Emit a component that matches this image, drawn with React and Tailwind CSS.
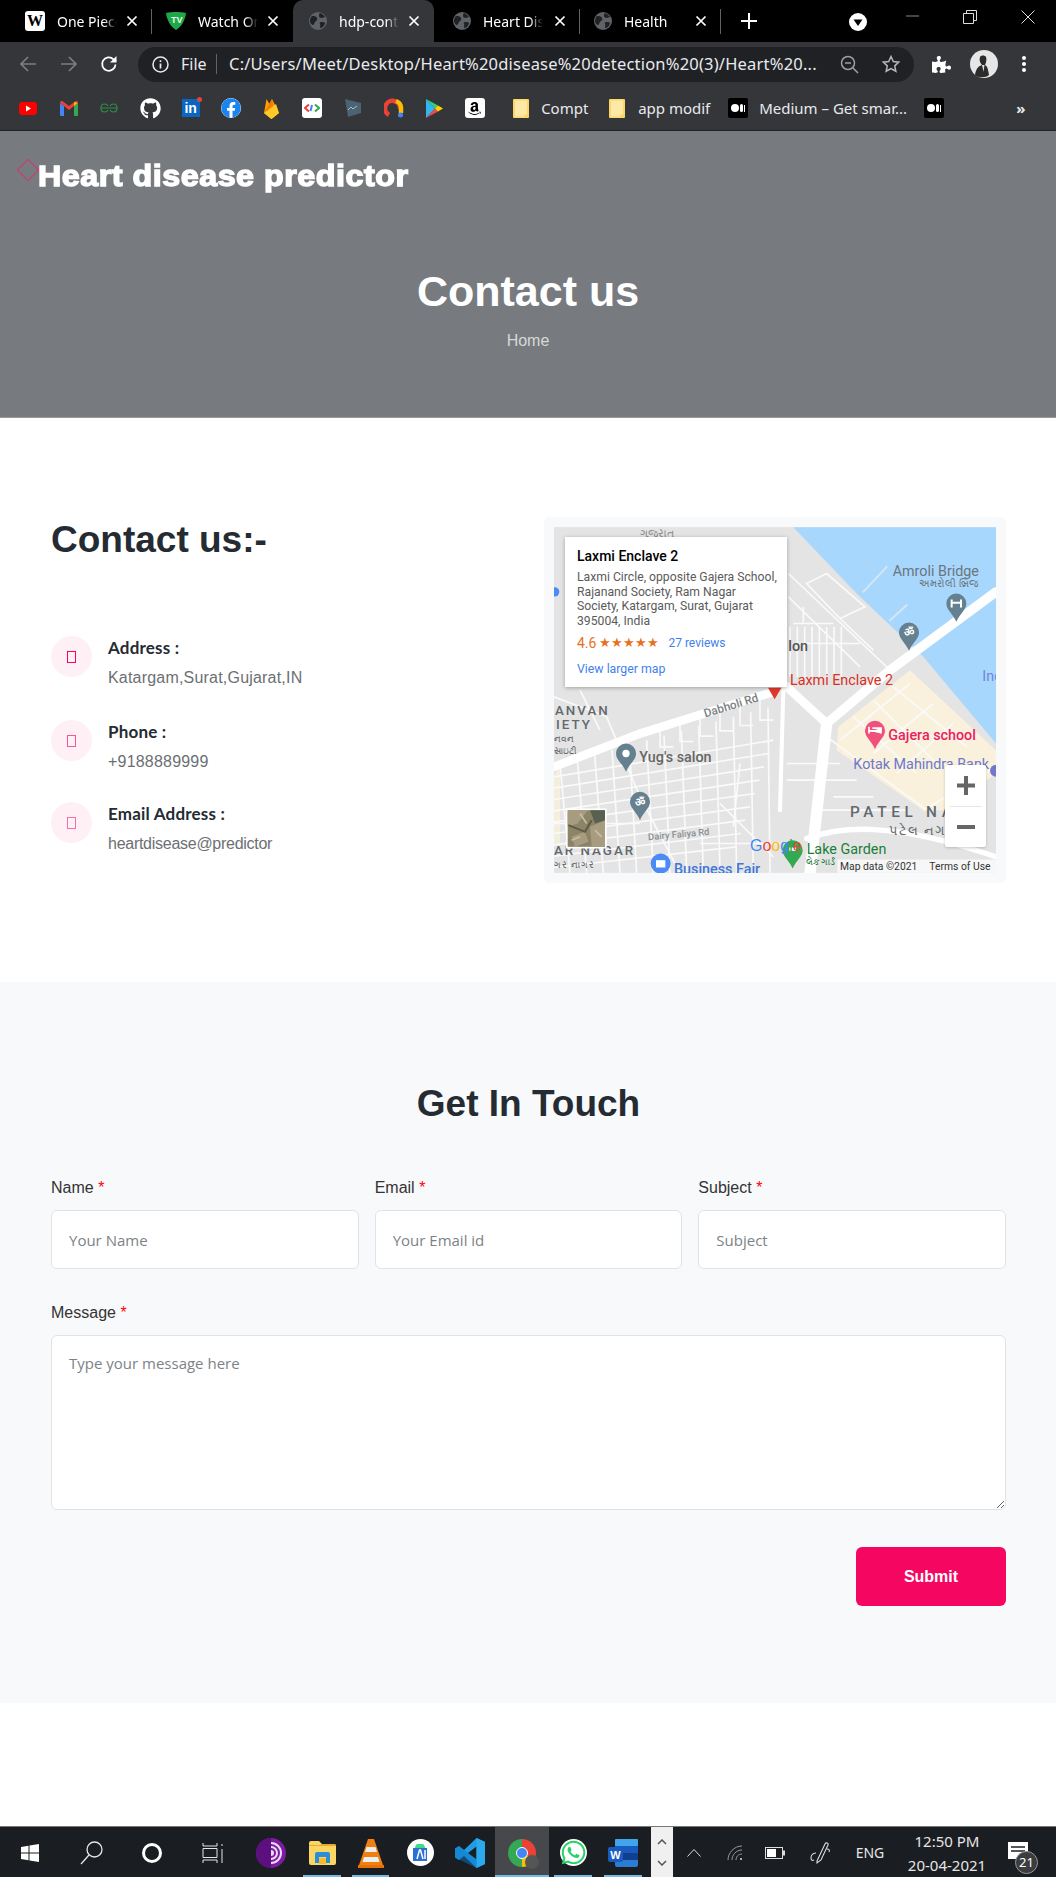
import React from "react";
import { FaGithub, FaFacebook, FaAmazon, FaWhatsapp, FaPuzzlePiece } from "react-icons/fa";

const X = ({ className = "" }) => (
  <svg width="12" height="12" viewBox="0 0 12 12" className={className}>
    <path d="M1.5 1.5l9 9M10.5 1.5l-9 9" stroke="#fff" strokeWidth="1.7" />
  </svg>
);

const Globe = () => (
  <svg width="18" height="18" viewBox="0 0 18 18" className="shrink-0">
    <circle cx="9" cy="9" r="9" fill="#5f6368" />
    <path d="M3 4c2 0 4 0 5 2s-1 3-2 4-1 3-2 3-3-2-3-4 1-4 2-5zM11 1c2 1 4 2 5 4l-3 1c-2 0-3-1-3-2s0-2 1-3zM12 10c2 0 4 0 4 1s-2 5-4 5 0-3-1-4 0-2 1-2z" fill="#202124" />
  </svg>
);

const WikiIcon = () => (
  <div className="w-[20px] h-[20px] rounded-[3px] bg-white shrink-0 flex items-center justify-center text-black font-bold text-[16px] leading-none" style={{ fontFamily: "'Liberation Serif', serif" }}>W</div>
);

const TvIcon = () => (
  <svg width="20" height="18" viewBox="0 0 20 18" className="shrink-0">
    <path d="M0 1c6-1.3 14-1.3 20 0-1 8-5 14-10 17C5 15 1 9 0 1z" fill="#1fa84a" />
    <text x="5" y="11" fontSize="9" fontWeight="700" fill="#e8ffe8" fontFamily="'Liberation Sans', sans-serif">TV</text>
  </svg>
);

function Tab({ icon, title, active, sep, className = "" }) {
  return (
    <div className={`w-[141px] h-[42px] shrink-0 flex items-center relative pr-[14px] ${active ? "bg-[#35363a] rounded-t-[10px] pl-[16px]" : "pl-[14px]"} ${className}`}>
      {icon}
      <div className="ml-[12px] w-[60px] overflow-hidden whitespace-nowrap text-[14px] text-white [mask-image:linear-gradient(90deg,#000_78%,transparent)]">{title}</div>
      <X className="ml-auto" />
      {sep && <div className="absolute right-0 top-[9px] w-px h-[25px] bg-[#5f6368]" />}
    </div>
  );
}

function TabBar() {
  return (
    <div className="h-[42px] bg-black flex pl-[11px]" style={{ fontFamily: "'Noto Sans', sans-serif" }}>
      <Tab icon={<WikiIcon />} title="One Piece" sep />
      <Tab icon={<TvIcon />} title="Watch One" />
      <Tab icon={<Globe />} title="hdp-contact" active />
      <Tab icon={<Globe />} title="Heart Disease" sep className="ml-[5px]" />
      <Tab icon={<Globe />} title="Health" sep />
      <svg width="16" height="16" viewBox="0 0 16 16" className="ml-[20px] mt-[13px]">
        <path d="M8 0v16M0 8h16" stroke="#fff" strokeWidth="2" />
      </svg>
      <svg width="18" height="18" viewBox="0 0 18 18" className="ml-[92px] mt-[13px]">
        <circle cx="9" cy="9" r="9" fill="#fff" />
        <path d="M4.5 6.5h9L9 13z" fill="#000" />
      </svg>
      <svg width="14" height="14" viewBox="0 0 14 14" className="ml-[39px] mt-[9px]">
        <path d="M0 7h13" stroke="#8a8a8a" />
      </svg>
      <svg width="14" height="14" viewBox="0 0 14 14" className="ml-[43px] mt-[10px]">
        <path d="M.5 3.5h10v10H.5zM3.5 3.5v-3h10v10h-3" fill="none" stroke="#ddd" />
      </svg>
      <svg width="14" height="14" viewBox="0 0 14 14" className="ml-[44px] mt-[10px]">
        <path d="M.5.5l13 13M13.5.5l-13 13" stroke="#ddd" />
      </svg>
    </div>
  );
}

function Toolbar() {
  return (
    <div className="h-[44px] bg-[#35363a] flex items-center" style={{ fontFamily: "'Noto Sans', sans-serif" }}>
      <svg width="18" height="18" viewBox="0 0 18 18" className="ml-[19px]">
        <path d="M17 9H2M9 2L2 9l7 7" fill="none" stroke="#7c7e82" strokeWidth="1.7" />
      </svg>
      <svg width="18" height="18" viewBox="0 0 18 18" className="ml-[23px]">
        <path d="M1 9h15M9 2l7 7-7 7" fill="none" stroke="#7c7e82" strokeWidth="1.7" />
      </svg>
      <svg width="18" height="18" viewBox="0 0 18 18" className="ml-[22px]">
        <path d="M15.5 9.5a6.7 6.7 0 1 1-2-5.2L16 6.5" fill="none" stroke="#fff" strokeWidth="1.8" />
        <path d="M16.5 1v6.5H10z" fill="#fff" />
      </svg>
      <div className="ml-[20px] w-[776px] h-[35px] rounded-full bg-[#202124] flex items-center pl-[14px] text-[#e8eaed]">
        <svg width="17" height="17" viewBox="0 0 17 17" className="shrink-0">
          <circle cx="8.5" cy="8.5" r="7.5" fill="none" stroke="#e8eaed" strokeWidth="1.5" />
          <path d="M8.5 7.5v5M8.5 4.2V6" stroke="#e8eaed" strokeWidth="1.7" />
        </svg>
        <span className="ml-[12px] w-[26px] text-[16px]">File</span>
        <div className="ml-[9px] w-px h-[20px] bg-[#5f6368]" />
        <span className="ml-[12px] w-[590px] shrink-0 whitespace-nowrap text-[16.5px] tracking-[0.2px]">C:/Users/Meet/Desktop/Heart%20disease%20detection%20(3)/Heart%20...</span>
        <svg width="19" height="19" viewBox="0 0 19 19" className="ml-[21px] shrink-0">
          <circle cx="8" cy="8" r="6.5" fill="none" stroke="#9aa0a6" strokeWidth="1.5" />
          <path d="M5 8h6M13 13l5 5" stroke="#9aa0a6" strokeWidth="1.5" />
        </svg>
        <svg width="20" height="20" viewBox="0 0 24 24" className="ml-[22px] shrink-0">
          <path d="M12 3l2.8 6 6.5.8-4.8 4.4 1.3 6.5-5.8-3.3-5.8 3.3 1.3-6.5-4.8-4.4 6.5-.8z" fill="none" stroke="#b4b7bb" strokeWidth="1.8" />
        </svg>
      </div>
      <FaPuzzlePiece className="ml-[18px] text-white text-[19px]" />
      <svg width="28" height="28" viewBox="0 0 28 28" className="ml-[19px]">
        <circle cx="14" cy="14" r="14" fill="#e6e6e6" />
        <path d="M5 25c1-7 4-9 7-10-2-2-3-5-2-8 1-2 5-2 6 0s0 6-1 8c2 1 3 3 4 10-3 3-11 3-14 0z" fill="#2b2b2b" />
        <path d="M12 15l1.500 7 1-7z" fill="#ddd" />
      </svg>
      <svg width="6" height="18" viewBox="0 0 6 18" className="ml-[23px]">
        <circle cx="3" cy="3" r="2" fill="#fff" />
        <circle cx="3" cy="9" r="2" fill="#fff" />
        <circle cx="3" cy="15" r="2" fill="#fff" />
      </svg>
    </div>
  );
}

const Folder = () => (
  <svg width="16" height="19" viewBox="0 0 16 19" className="block">
    <path d="M1 0h14a1 1 0 0 1 1 1v17a1 1 0 0 1-1 1H1a1 1 0 0 1-1-1V1a1 1 0 0 1 1-1z" fill="#fdd663" />
    <path d="M2 1.500h12v14h-2.500v2H2z" fill="#fee9a6" />
  </svg>
);

const Medium = () => (
  <div className="w-[20px] h-[20px] bg-black rounded-[2px] flex items-center justify-center gap-px shrink-0">
    <span className="w-[8px] h-[8px] rounded-full bg-white" />
    <span className="w-[3px] h-[8px] rounded-full bg-white" />
    <span className="w-[1px] h-[7px] bg-white" />
  </div>
);

const bookmarkIcons = [
  <svg width="18" height="13" viewBox="0 0 18 13"><rect width="18" height="13" rx="3" fill="#f00" /><path d="M7 3.500l5 3-5 3z" fill="#fff" /></svg>,
  <svg width="18" height="15" viewBox="0 0 18 15"><path d="M0 2l4 3v10H1a1 1 0 0 1-1-1z" fill="#4285f4" /><path d="M18 2l-4 3v10h3a1 1 0 0 0 1-1z" fill="#34a853" /><path d="M0 2c0-2 2-2.500 3-1.500L9 5l6-4.500c1-1 3-.5 3 1.500l-4 3-5 4-5-4z" fill="#ea4335" /><path d="M14 .9L18 2l-4 3z" fill="#fbbc04" /></svg>,
  <svg width="18" height="10" viewBox="0 0 18 10"><g fill="none" stroke="#2f8d46" strokeWidth="1.2"><path d="M9 5H1c0-2 1-4 3.500-4 2 0 3 1 3.500 2M9 5h8c0-2-1-4-3.500-4-2 0-3 1-3.500 2" /><path d="M1 5c0 2 1 4 3.500 4 2 0 3-1 3.500-2M17 5c0 2-1 4-3.500 4-2 0-3-1-3.500-2" /></g></svg>,
  <FaGithub className="text-white text-[21px]" />,
  <div className="relative w-[18px] h-[18px] bg-[#0a66c2] text-white font-bold text-[14px] leading-[18px] text-center" style={{ fontFamily: "'Liberation Sans', sans-serif" }}>in<span className="absolute -top-[2px] -right-[2px] w-[5px] h-[5px] rounded-full bg-[#e0453a]" /></div>,
  <FaFacebook className="text-[#1a84f0] text-[20px] bg-white rounded-full" />,
  <svg width="15" height="21" viewBox="0 0 15 21"><path d="M0 15L2.500 1l3 5L8 1l7 14-7.500 6z" fill="#ffa000" /><path d="M0 15L8 1l2 10-2.500 10z" fill="#f57c00" /><path d="M0 15l7.500 6 7.500-6-3-9z" fill="#ffca28" /></svg>,
  <div className="w-[20px] h-[20px] rounded-[3px] bg-white flex items-center justify-center"><svg width="16" height="8" viewBox="0 0 16 8"><path d="M5 .5L1 4l4 3.500" fill="none" stroke="#ea4335" strokeWidth="2" /><path d="M11 .5L15 4l-4 3.500" fill="none" stroke="#34a853" strokeWidth="2" /><path d="M8 1l-1.500 6" stroke="#4285f4" strokeWidth="2" /></svg></div>,
  <svg width="16" height="18" viewBox="0 0 16 18"><path d="M0 0l16 4v10L3 18z" fill="#4c6373" /><path d="M3 11l3-3 2 2 4-3" fill="none" stroke="#a9bdc9" /></svg>,
  <svg width="20" height="20" viewBox="0 0 20 20"><path d="M5 17A7.500 7.500 0 1 1 16 11" fill="none" stroke="#ea4335" strokeWidth="4.500" /><path d="M12 3A7.500 7.500 0 0 1 17 10v5" fill="none" stroke="#fbbc04" strokeWidth="4.500" /><circle cx="16.500" cy="17" r="2.500" fill="#4285f4" /></svg>,
  <svg width="17" height="19" viewBox="0 0 17 19"><path d="M0 0l9 9.500L0 19z" fill="#2fb8f0" /><path d="M0 0l12 6.500-3 3z" fill="#35d07f" /><path d="M0 19l12-6.500-3-3z" fill="#f04a50" /><path d="M12 6.500l5 3-5 3-3-3z" fill="#ffd200" /></svg>,
  <div className="w-[20px] h-[20px] rounded-[3px] bg-white flex items-center justify-center"><FaAmazon className="text-black text-[15px]" /></div>,
];

function Bookmarks() {
  return (
    <div className="h-[45px] bg-[#35363a] border-b border-[#222] flex items-center pl-[8px] text-[#e8eaed] text-[15px]" style={{ fontFamily: "'Noto Sans', sans-serif" }}>
      {bookmarkIcons.map((icon, i) => (
        <div key={i} className="w-[40.6px] flex justify-center shrink-0">{icon}</div>
      ))}
      <div className="ml-[18px]"><Folder /></div>
      <span className="ml-[12px] w-[46px]">Compt</span>
      <div className="ml-[22px]"><Folder /></div>
      <span className="ml-[13px] w-[70px] whitespace-nowrap">app modif</span>
      <div className="ml-[20px]"><Medium /></div>
      <span className="ml-[11px] w-[144px] whitespace-nowrap">Medium – Get smar...</span>
      <div className="ml-[21px]"><Medium /></div>
      <span className="ml-[72px] text-[15px] font-bold">»</span>
    </div>
  );
}

// the logo text is Arial Black in the original, widened here from Liberation Sans
const Hero = () => (
  <div className="h-[287px] bg-[#777b7f] flex flex-col items-center border-b border-[#999]">
    <div className="self-start flex items-center pl-[20px] pt-[29px] h-[63px]">
      <div className="w-[16px] h-[16px] rotate-45 border border-[#d6336c] -mt-[14px] shrink-0" />
      <span className="ml-[2px] origin-left scale-x-[1.11] text-white font-bold text-[29px] tracking-[0.5px] [-webkit-text-stroke:1.4px_#fff] whitespace-nowrap">Heart disease predictor</span>
    </div>
    <h1 className="mt-[70px] text-[43px] leading-[54px] font-bold text-white">Contact us</h1>
    <a className="mt-[11px] text-[16px] leading-[24px] text-[#d8d8d8]">Home</a>
  </div>
);

const Tofu = ({ color }) => <span className={`block w-[9px] h-[12px] border ${color}`} />;

function InfoRow({ label, value, tofu, spacing, className = "" }) {
  return (
    <div className={`flex gap-[16px] ${className}`}>
      <div className="w-[41px] h-[41px] rounded-full bg-[#fff0f6] flex items-center justify-center shrink-0">
        <Tofu color={tofu} />
      </div>
      <div>
        <div className="text-[17px] leading-[24px] font-bold tracking-[0.2px] text-[#252b33]" style={{ fontFamily: "Lato, sans-serif" }}>{label}</div>
        <div className={`mt-[6px] text-[16px] leading-[24px] text-[#6c6f73] ${spacing}`}>{value}</div>
      </div>
    </div>
  );
}

// small streets, in the coordinates of the map svg
const streets = [
  ...Array.from({ length: 13 }, (_, i) => `M${60 + i * 52} ${760 - i * 14}L${90 + i * 50} 1088`),
  ...Array.from({ length: 9 }, (_, i) => `M42 ${800 + i * 34}L${700 - i * 14} ${690 + i * 40}`),
  ...Array.from({ length: 6 }, (_, i) => `M${360 + i * 60} ${650 - i * 16}v60h40`),
  ...Array.from({ length: 8 }, (_, i) => `M${750 + i * 22} 350V500`),
  "M745 190L1040 470M800 220L860 190L975 290L900 325zM900 325L1000 420M745 260L960 470",
  "M760 340H880M760 400H960M790 290V340",
  "M42 560L200 620L300 860L420 1088M120 540L180 660M740 760H900M740 810H950M880 860H1000M830 900H1100",
  "M940 620L1130 790M1000 570L1190 760M1060 530L1280 710M1110 520L900 690M1180 580L1000 730M1240 640L1070 790",
  "M860 680L1160 900M1150 900L1368 770",
  "M42 940H300M480 1000H720M540 880L700 1040M600 760L580 950",
];

function MapPin({ x, y, color, children }) {
  return (
    <g transform={`translate(${x} ${y})`}>
      <path d="M-30 0a30 30 0 1 1 60 0c0 20-20 30-30 55C-10 30-30 20-30 0z" fill={color} />
      {children}
    </g>
  );
}

const OmGlyph = () => <text y="11" textAnchor="middle" fontSize="34" fontWeight="700" fill="#fff">ॐ</text>;

function MapDrawing() {
  return (
    <svg viewBox="42 51 1326 1037" className="block w-full h-full" style={{ fontFamily: "Roboto, sans-serif" }}>
      <rect x="42" y="51" width="1326" height="1037" fill="#e4e4e4" />
      <path d="M760 51H1368V700L1150 440L1050 345L950 250Z" fill="#a8d7fe" />
      <path d="M895 650L1110 480L1368 720V790L1210 900L1150 900L890 720Z" fill="#f9f1dc" />
      <path d="M42 800V1000L60 1000V760Z" fill="#f4eedc" />
      <g fill="none" stroke="#fafafa" strokeWidth="5">
        {streets.map((d, i) => <path key={i} d={d} />)}
      </g>
      <g fill="none" stroke="#fff" strokeLinecap="round">
        <path d="M1368 245L1050 480L860 640" strokeWidth="28" />
        <path d="M42 770L300 670L700 545" strokeWidth="26" />
        <path d="M735 525L860 640" strokeWidth="26" />
        <path d="M860 640L810 1088" strokeWidth="34" />
        <path d="M730 540L720 900" strokeWidth="12" />
        <path d="M800 985C900 950 1050 930 1368 1040" strokeWidth="16" />
        <path d="M1040 170L970 245M1100 285L1050 330" stroke="#d6e6f5" strokeWidth="6" />
      </g>
      <MapPin x={1249} y={280} color="#65808e"><path d="M-14-12v24M14-12v24M-14-2h28" stroke="#fff" strokeWidth="6" /></MapPin>
      <MapPin x={1107} y={367} color="#65808e"><OmGlyph /></MapPin>
      <MapPin x={300} y={875} color="#65808e"><OmGlyph /></MapPin>
      <MapPin x={258} y={730} color="#65808e"><circle r="11" fill="#fff" /></MapPin>
      <MapPin x={1005} y={662} color="#f0507c"><path d="M-18 8V-12M-18 0H18V8M-8-8H18V0" stroke="#fff" strokeWidth="5" fill="#fff" /></MapPin>
      <MapPin x={758} y={1020} color="#34a853"><path d="M-10-8h20v10H-10z" fill="#fff" /></MapPin>
      <path d="M684 533h40l-20 34z" fill="#e0392b" />
      <circle cx="362" cy="1060" r="30" fill="#4c8bf5" />
      <path d="M348 1050h28v22h-28z" fill="#fff" />
      <circle cx="44" cy="245" r="14" fill="#4c8bf5" />
      <circle cx="1368" cy="782" r="18" fill="#7278c8" />
      <g fontSize="43" fill="#6f7479">
        <text x="1058" y="198" fill="#6b757c">Amroli Bridge</text>
        <text x="1138" y="232" fontSize="30" fill="#6b757c">અમરોલી બ્રિજ</text>
        <text x="1327" y="514" fill="#6f86d6">Ind</text>
        <text x="745" y="424" fontWeight="500" fill="#555">lon</text>
        <text x="298" y="757" fontWeight="500" fill="#666">Yug's salon</text>
        <text x="750" y="524" fill="#d93025">Laxmi Enclave 2</text>
        <text x="1045" y="690" fontWeight="500" fill="#e91e63">Gajera school</text>
        <text x="940" y="776" fill="#6f78c9">Kotak Mahindra Bank</text>
        <text x="800" y="1032" fill="#188038">Lake Garden</text>
        <text x="798" y="1064" fontSize="26" fill="#188038">લેક ગાર્ડ</text>
        <text x="402" y="1092" fontWeight="500" fill="#3f78d8">Business Fair</text>
        <text x="45" y="614" fontSize="40" fontWeight="500" letterSpacing="6" fill="#62686d">ANVAN</text>
        <text x="48" y="658" fontSize="40" fontWeight="500" letterSpacing="6" fill="#62686d">IETY</text>
        <text x="42" y="696" fontSize="28" fill="#62686d">નવન</text>
        <text x="42" y="732" fontSize="28" fill="#62686d">સાઇટી</text>
        <text x="42" y="1036" fontSize="40" fontWeight="500" letterSpacing="6" fill="#62686d">AR NAGAR</text>
        <text x="42" y="1074" fontSize="28" letterSpacing="3" fill="#62686d">ગર નાગર</text>
        <text x="930" y="922" fontSize="46" fontWeight="500" letterSpacing="14" fill="#62686d">PATEL NAGA</text>
        <text x="1048" y="974" fontSize="40" fontWeight="500" letterSpacing="4" fill="#62686d">પટેલ નગર</text>
        <text x="496" y="622" fontSize="35" fontWeight="500" transform="rotate(-17 496 622)" fill="#7a7f84">Dabholi Rd</text>
        <text x="325" y="990" fontSize="28" fontWeight="500" transform="rotate(-5 325 990)" fill="#8a8f94">Dairy Faliya Rd</text>
        <text x="300" y="82" fontSize="34" fill="#8a8f94">ગુજરાત</text>
      </g>
      <text x="630" y="1024" fontSize="48" fontFamily="'Liberation Sans', sans-serif">
        <tspan fill="#4285f4">G</tspan><tspan fill="#ea4335">o</tspan><tspan fill="#fbbc04">o</tspan><tspan fill="#4285f4">g</tspan><tspan fill="#34a853">l</tspan><tspan fill="#ea4335">e</tspan>
      </text>
      <rect x="892" y="1048" width="476" height="40" fill="#fff" fillOpacity=".7" />
      <text x="900" y="1079" fontSize="31" fill="#333">Map data ©2021</text>
      <text x="1168" y="1079" fontSize="31" fill="#333">Terms of Use</text>
      {/* satellite thumbnail */}
      <rect x="78" y="895" width="122" height="120" fill="#fff" />
      <rect x="83" y="900" width="112" height="110" fill="#8c8468" />
      <path d="M83 900h60l-30 40-30 10zM150 950l45-20v80h-40zM95 980l40-15 10 30-40 15z" fill="#a89c80" />
      <path d="M150 900h45v30l-30 10z" fill="#59604f" />
      <path d="M85 945l50 20 20-35" fill="none" stroke="#5f5a46" strokeWidth="6" />
      <path d="M120 910l20 30M165 960l20 20M95 990l25-10" stroke="#c8bda0" strokeWidth="5" />
    </svg>
  );
}

function MapCard() {
  return (
    <div className="w-[462px] h-[366px] shrink-0 bg-[#f8f9fb] rounded-[6px] p-[10px]">
      <div className="relative w-[442px] h-[346px] overflow-hidden">
        <MapDrawing />
        <div className="absolute left-[11px] top-[10px] w-[222px] h-[150px] bg-white shadow-[0_1px_4px_rgba(0,0,0,0.3)] pl-[12px] pt-[9px]" style={{ fontFamily: "Roboto, sans-serif" }}>
          <div className="text-[14px] leading-[20px] font-medium text-black">Laxmi Enclave 2</div>
          <div className="mt-[4px] text-[12.2px] leading-[14.7px] text-[#5b5b5b] whitespace-nowrap">
            Laxmi Circle, opposite Gajera School,<br />Rajanand Society, Ram Nagar<br />Society, Katargam, Surat, Gujarat<br />395004, India
          </div>
          <div className="mt-[6px] flex items-center text-[12px] leading-[16px]">
            <span className="text-[14px] text-[#e7711b]">4.6</span>
            <span className="ml-[3px] text-[12.5px] tracking-[-0.2px] text-[#e7711b]">★★★★★</span>
            <span className="ml-[10px] text-[#427fed]">27 reviews</span>
          </div>
          <div className="mt-[10px] text-[12.3px] leading-[16px] text-[#427fed]">View larger map</div>
        </div>
        <div className="absolute left-[391px] top-[238px] w-[41px] h-[82px] bg-white rounded-[2px] shadow-[0_1px_3px_rgba(0,0,0,0.2)] flex flex-col items-center">
          <svg width="20" height="41" viewBox="0 0 20 41"><path d="M10 11v19M1 20.5h18" stroke="#666" strokeWidth="4" /></svg>
          <div className="w-[32px] h-px bg-[#e6e6e6]" />
          <svg width="20" height="40" viewBox="0 0 20 40"><path d="M1 20h18" stroke="#666" strokeWidth="4" /></svg>
        </div>
      </div>
    </div>
  );
}

const Label = ({ children }) => (
  <label className="block h-[24px] text-[16px] leading-[24px] text-[#333] mb-[10px]">
    {children} <span className="text-[#f00]">*</span>
  </label>
);

const fieldClass = "block w-full bg-white border border-[#e2e3e6] rounded-[6px] px-[17px] text-[15px] outline-none placeholder:text-[#7d8287]";

function Field({ label, placeholder }) {
  return (
    <div>
      <Label>{label}</Label>
      <input placeholder={placeholder} className={`${fieldClass} h-[59px]`} style={{ fontFamily: "'Open Sans', sans-serif" }} />
    </div>
  );
}

function Form() {
  return (
    <div className="bg-[#f8f9fb] pl-[51px] pr-[50px] pt-[100px] pb-[97px]">
      <h2 className="text-center text-[37px] leading-[44px] font-bold text-[#252b33]">Get In Touch</h2>
      <div className="mt-[50px] grid grid-cols-3 gap-x-[16px]">
        <Field label="Name" placeholder="Your Name" />
        <Field label="Email" placeholder="Your Email id" />
        <Field label="Subject" placeholder="Subject" />
      </div>
      <div className="mt-[32px]">
        <Label>Message</Label>
        <textarea placeholder="Type your message here" className={`${fieldClass} h-[175px] pt-[16px] pb-[12px]`} style={{ fontFamily: "'Open Sans', sans-serif" }} />
      </div>
      <div className="mt-[37px] flex justify-end">
        <button className="w-[150px] h-[59px] rounded-[6px] bg-[#f50761] text-white font-bold text-[16px]">Submit</button>
      </div>
    </div>
  );
}

function Cell({ w, line, active, children }) {
  return (
    <div className={`relative h-full flex items-center justify-center shrink-0 ${w} ${active ? "bg-[#46484c]" : ""}`}>
      {children}
      {line && <div className={`absolute bottom-0 h-[3px] bg-[#76b9ed] ${line}`} />}
    </div>
  );
}

function Taskbar() {
  return (
    <div className="h-[52px] bg-[#1a1d21] border-t border-[#777] flex text-[#e6e6e6]" style={{ fontFamily: "'Noto Sans', sans-serif" }}>
      <Cell w="w-[60px]">
        <svg width="18" height="18" viewBox="0 0 18 18"><path d="M0 3l7.5-1.200V8.500H0zM8.500 1.600L18 0v8.500H8.500zM0 9.500h7.500v6.700L0 15zM8.500 9.500H18V18l-9.500-1.600z" fill="#fff" /></svg>
      </Cell>
      <Cell w="w-[62px]">
        <svg width="23" height="24" viewBox="0 0 23 24"><circle cx="14.5" cy="8.5" r="7.5" fill="none" stroke="#e6e6e6" strokeWidth="1.3" /><path d="M9 14L1 23" stroke="#e6e6e6" strokeWidth="1.3" /></svg>
      </Cell>
      <Cell w="w-[60px]">
        <div className="w-[20px] h-[20px] rounded-full border-[3px] border-white" />
      </Cell>
      <Cell w="w-[62px]">
        <svg width="22" height="20" viewBox="0 0 22 20"><path d="M1 0v3h14V0M1 5.500h14v9H1zM1 20v-3h14v3" fill="none" stroke="#e6e6e6" /><path d="M20 1v2M20 6v14" stroke="#e6e6e6" /></svg>
      </Cell>
      <Cell w="w-[54px]">
        <svg width="30" height="30" viewBox="0 0 30 30"><circle cx="15" cy="15" r="15" fill="#7d1ba3" /><path d="M15 0a15 15 0 0 0 0 30z" fill="#5c1080" /><path d="M15 5a10 10 0 0 1 0 20M15 9a6 6 0 0 1 0 12" fill="none" stroke="#eadcf2" strokeWidth="2" /><path d="M15 12a3 3 0 0 1 0 6z" fill="#eadcf2" /></svg>
      </Cell>
      <Cell w="w-[48px]" line="left-[5px] w-[38px]">
        <svg width="27" height="24" viewBox="0 0 27 24"><path d="M0 2a2 2 0 0 1 2-2h8l3 3h12a2 2 0 0 1 2 2v17a2 2 0 0 1-2 2H2a2 2 0 0 1-2-2z" fill="#fcd664" /><path d="M0 4h11l2-1h12a2 2 0 0 1 2 2H0z" fill="#e8a92c" /><path d="M6 22v-9a2 2 0 0 1 2-2h11a2 2 0 0 1 2 2v9h-4v-6h-7v6z" fill="#2a8fd6" /><rect x="10" y="17" width="7" height="6" fill="#f9b932" /></svg>
      </Cell>
      <Cell w="w-[49px]" line="left-[6px] w-[37px]">
        <svg width="26" height="30" viewBox="0 0 26 30"><path d="M10 1h6l9 26H1z" fill="#f07f12" /><path d="M8.500 9h9l1.500 5H7zM6 19h14l1.500 5h-17z" fill="#eee" /><path d="M0 27h26v3H0z" fill="#e4720a" /></svg>
      </Cell>
      <Cell w="w-[50px]">
        <div className="w-[27px] h-[27px] rounded-full bg-white flex items-center justify-center">
          <svg width="16" height="17" viewBox="0 0 16 17"><path d="M3 4a5 5 0 0 1 10 0z" fill="#3ddc84" /><rect x="1" y="4" width="14" height="13" fill="#2a6fd6" /><path d="M5 15l2.500-9h1L11 15M13 6v9" fill="none" stroke="#fff" strokeWidth="1.5" /></svg>
        </div>
      </Cell>
      <Cell w="w-[50px]">
        <svg width="30" height="30" viewBox="0 0 30 30">
          <path d="M21.500 0L30 4v22l-8.500 4L9 18l-5 4-4-2.500V10.500L4 8l5 4z" fill="#1f9ce4" />
          <path d="M21.500 8.500v13L13 15z" fill="#1a1d21" />
          <path d="M21.500 0L30 4v22l-8.500 4z" fill="#2aa9ee" />
          <path d="M0 10.500L4 8l17.500 14v8L0 19.500z" fill="#0b76c4" opacity=".5" />
        </svg>
      </Cell>
      <Cell w="w-[54px]" active line="left-0 w-full">
        <div className="relative w-[28px] h-[28px] rounded-full" style={{ background: "conic-gradient(#ea4335 0 33%, #fbbc04 33% 50%, #34a853 50% 100%)" }}>
          <div className="absolute inset-[8px] rounded-full bg-[#4285f4] border border-white" />
          <div className="absolute -right-[3px] -bottom-[2px] w-[14px] h-[14px] rounded-full bg-[#555]" />
        </div>
      </Cell>
      <Cell w="w-[49px]" line="left-[5px] w-[38px]">
        <div className="w-[27px] h-[27px] rounded-full bg-white flex items-center justify-center">
          <FaWhatsapp className="text-[#25d366] text-[27px]" />
        </div>
      </Cell>
      <Cell w="w-[50px]" line="left-[6px] w-[38px]">
        <svg width="30" height="28" viewBox="0 0 30 28"><rect x="7" width="23" height="28" rx="2" fill="#2b7cd3" /><rect x="7" y="7" width="23" height="7" fill="#185abd" /><rect x="7" y="14" width="23" height="7" fill="#103f91" /><rect x="7" width="23" height="7" fill="#41a5ee" rx="1" /><rect y="8" width="15" height="15" rx="2" fill="#1a5cbe" /><text x="7.5" y="20" textAnchor="middle" fontSize="11" fontWeight="700" fill="#fff" fontFamily="'Liberation Sans', sans-serif">W</text></svg>
      </Cell>
      <div className="w-[3px]" />
      <div className="w-[22px] h-full bg-[#f0f0f0] flex flex-col items-center justify-around py-[4px]">
        <svg width="10" height="6" viewBox="0 0 10 6"><path d="M1 5l4-4 4 4" fill="none" stroke="#555" strokeWidth="1.5" /></svg>
        <svg width="10" height="6" viewBox="0 0 10 6"><path d="M1 1l4 4 4-4" fill="none" stroke="#555" strokeWidth="1.5" /></svg>
      </div>
      <Cell w="w-[42px]">
        <svg width="14" height="8" viewBox="0 0 14 8"><path d="M.5 7.500l6.500-7 6.500 7" fill="none" stroke="#ddd" /></svg>
      </Cell>
      <Cell w="w-[40px]">
        <svg width="16" height="16" viewBox="0 0 16 16"><g fill="none" stroke="#9a9a9a"><path d="M1 15C1 8 7 1 15 1M5 15c0-5 4-10 10-10M9 15c0-3 2-6 6-6" /></g><circle cx="14" cy="14" r="1" fill="#ddd" /></svg>
      </Cell>
      <Cell w="w-[40px]">
        <svg width="20" height="12" viewBox="0 0 20 12"><rect x=".5" y=".5" width="17" height="11" fill="none" stroke="#ddd" /><rect x="2" y="2" width="9" height="8" fill="#fff" /><rect x="18" y="3.5" width="2" height="5" fill="#ddd" /></svg>
      </Cell>
      <Cell w="w-[50px]">
        <svg width="24" height="24" viewBox="0 0 24 24"><g fill="none" stroke="#ddd" strokeWidth="1.1"><path d="M9 20l8-17c1-2 4-1 3 1l-7 15-4 3z" /><path d="M8 12c-4 0-5 3-5 5s1 3 3 2M19 8c2 0 3 1 2 3" /></g></svg>
      </Cell>
      <div className="ml-[10px] w-[30px] flex items-center justify-center text-[14px]">ENG</div>
      <div className="ml-[17px] w-[90px] flex flex-col items-center justify-center text-[15px] leading-[24px] whitespace-nowrap">
        <span>12:50 PM</span>
        <span>20-04-2021</span>
      </div>
      <div className="ml-[16px] relative mt-[15px] w-[20px] h-[17px] bg-white">
        <div className="absolute left-[3px] top-[4px] w-[14px] h-[2px] bg-[#555]" />
        <div className="absolute left-[3px] top-[8px] w-[14px] h-[2px] bg-[#555]" />
        <div className="absolute left-[7px] top-[9px] w-[23px] h-[23px] rounded-full bg-[#3a3c40] border border-[#999] flex items-center justify-center text-[13px] text-white">21</div>
      </div>
    </div>
  );
}

export default function App() {
  return (
    <div className="w-[1056px] bg-white" style={{ fontFamily: "'Liberation Sans', Arial, sans-serif" }}>
      <TabBar />
      <Toolbar />
      <Bookmarks />
      <Hero />
      <div className="h-[564px] pl-[51px] pr-[50px] pt-[99px] flex justify-between items-start">
        <div>
          <h2 className="text-[37px] leading-[46px] font-bold text-[#252b33]">Contact us:-</h2>
          <InfoRow className="mt-[73px]" label="Address :" value="Katargam,Surat,Gujarat,IN" spacing="tracking-[0.2px]" tofu="border-[#f50761]" />
          <InfoRow className="mt-[30px]" label="Phone :" value="+9188889999" spacing="tracking-[0.2px]" tofu="border-[#f7559a]" />
          <InfoRow className="mt-[28px]" label="Email Address :" value="heartdisease@predictor" spacing="tracking-[-0.27px]" tofu="border-[#f76ea8]" />
        </div>
        <MapCard />
      </div>
      <Form />
      <div className="h-[123px]" />
      <Taskbar />
    </div>
  );
}
